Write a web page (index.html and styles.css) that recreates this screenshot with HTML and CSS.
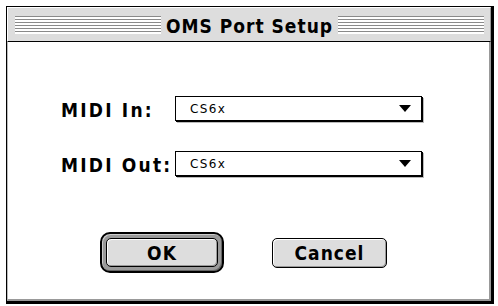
FILE: index.html
```html
<!DOCTYPE html>
<html>
<head>
<meta charset="utf-8">
<link rel="stylesheet" href="styles.css">
</head>
<body>
<div class="window">
  <div class="titlebar">
    <div class="stripes"></div>
    <div class="title">OMS Port Setup</div>
    <div class="stripes"></div>
  </div>
  <div class="content">
    <div class="row first">
      <div class="label">MIDI In:</div>
      <div class="popup"><span class="value">CS6x</span><span class="arrow"></span></div>
    </div>
    <div class="row second">
      <div class="label">MIDI Out:</div>
      <div class="popup"><span class="value">CS6x</span><span class="arrow"></span></div>
    </div>
    <div class="buttons">
      <div class="default-ring"><div class="button ok">OK</div></div>
      <div class="button cancel">Cancel</div>
    </div>
  </div>
</div>
</body>
</html>
```
FILE: styles.css
```css
html, body { margin: 0; padding: 0; background: #fff; }
body { width: 498px; height: 306px; overflow: hidden; }

.window {
  margin: 6px 0 0 6px;
  width: 488px;
  height: 298px;
  box-sizing: border-box;
  border: 1px solid #000;
  border-right-width: 3px;
  border-bottom-width: 3px;
  display: flex;
  flex-direction: column;
  background: #ddd;
}

.titlebar {
  height: 35px;
  box-sizing: border-box;
  border-top: 1px solid #fff;
  border-left: 1px solid #fff;
  border-right: 1px solid #999;
  border-bottom: 1px solid #000;
  display: flex;
  align-items: center;
  padding: 0 6px 0 7px;
  gap: 5px;
  flex: none;
}

.stripes {
  flex: 1;
  height: 18px;
  background: repeating-linear-gradient(to bottom, #8a8a8a 0, #8a8a8a 1.5px, #fff 1.5px, #fff 3px);
  margin-top: 1px;
}

.title {
  font-family: "DejaVu Sans Condensed", "DejaVu Sans", sans-serif;
  font-stretch: condensed;
  font-weight: bold;
  font-size: 19px;
  letter-spacing: 1px;
  color: #000;
  line-height: 22px;
  margin-top: 2px;
}

.content {
  flex: 1;
  background: #fff;
  border-left: 1px solid #bbb;
  border-right: 2px solid #999;
  border-bottom: 2px solid #999;
  display: flex;
  flex-direction: column;
  padding-left: 53px;
}

.row {
  display: flex;
  align-items: center;
  height: 27px;
}
.row.first { margin-top: 54px; }
.row.second { margin-top: 28px; }

.label {
  width: 114px;
  font-family: "DejaVu Sans Condensed", "DejaVu Sans", sans-serif;
  font-stretch: condensed;
  font-weight: bold;
  font-size: 19px;
  letter-spacing: 2.2px;
  color: #000;
  line-height: 22px;
  white-space: nowrap;
}

.popup {
  width: 247px;
  height: 25px;
  box-sizing: border-box;
  border: 1px solid #000;
  box-shadow: 1px 1px 0 #000, 2px 2px 0 #bbb;
  background: #fff;
  display: flex;
  align-items: center;
  justify-content: space-between;
  padding: 0 10px 0 14px;
  margin-bottom: 2px;
}

.value {
  font-family: "DejaVu Sans", sans-serif;
  font-size: 12px;
  letter-spacing: 1.4px;
  color: #000;
}

.arrow {
  width: 0;
  height: 0;
  border-left: 6px solid transparent;
  border-right: 6px solid transparent;
  border-top: 7px solid #000;
}

.buttons {
  display: flex;
  align-items: center;
  margin-top: 54px;
  margin-left: 39px;
  gap: 48px;
}

.default-ring {
  box-sizing: border-box;
  border: 2px solid #000;
  border-radius: 10px;
  background: #9a9a9a;
  padding: 4px;
  box-shadow: inset 1px 1px 0 #ccc, inset -1px -1px 0 #666;
}

.button {
  box-sizing: border-box;
  height: 30px;
  border: 1px solid #000;
  border-radius: 5px;
  background: #ddd;
  box-shadow: inset 1px 1px 0 #fff, inset -1px -1px 0 #999;
  display: flex;
  align-items: center;
  justify-content: center;
  font-family: "DejaVu Sans Condensed", "DejaVu Sans", sans-serif;
  font-stretch: condensed;
  font-weight: bold;
  font-size: 19px;
  letter-spacing: 1px;
  color: #000;
}
.button.ok { width: 112px; height: 29px; }
.button.cancel { width: 115px; }
```
